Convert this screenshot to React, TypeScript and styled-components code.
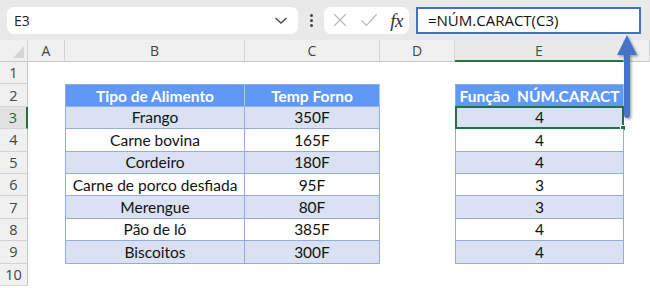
import React from "react";
import styled, { createGlobalStyle, css } from "styled-components";

const Global = createGlobalStyle`
  html, body { margin: 0; padding: 0; background: #fff; overflow: hidden; }
  * { box-sizing: border-box; }
`;

const Page = styled.div`
  width: 650px;
  height: 288px;
  position: relative;
  overflow: hidden;
  background: #fff;
`;

const Toolbar = styled.div`
  height: 40px;
  background: #e9e9e9;
  display: flex;
  align-items: center;
  padding: 0 9px 0 7px;
  font-family: "Open Sans", "Noto Sans", sans-serif;
`;

const NameBox = styled.div`
  width: 291px;
  height: 27px;
  background: #fff;
  border-radius: 7px;
  display: flex;
  align-items: center;
  justify-content: space-between;
  padding: 0 10px 0 7px;
  font-size: 14px;
  color: #222;
`;

const Dots = styled.div`
  width: 26px;
  display: flex;
  flex-direction: column;
  align-items: center;
  gap: 2px;
  span {
    width: 3px;
    height: 3px;
    border-radius: 50%;
    background: #444;
  }
`;

const IconBox = styled.div`
  width: 85px;
  height: 27px;
  background: #fff;
  border-radius: 7px;
  display: flex;
  align-items: center;
  justify-content: space-between;
  padding: 0 6px 0 8px;
`;

const Fx = styled.span`
  font-family: "Liberation Serif", serif;
  font-style: italic;
  font-size: 19px;
  color: #333;
  line-height: 1;
  letter-spacing: -0.5px;
`;

const FormulaBox = styled.div`
  margin-left: 7px;
  flex: 1;
  height: 27px;
  border: 2px solid #4472c4;
  background: #fff;
  display: flex;
  align-items: center;
  padding-left: 10px;
  font-size: 15px;
  color: #111;
`;

const Sheet = styled.div`
  display: grid;
  grid-template-columns: 28px 37px 180px 135px 75px 169px 1fr;
  grid-template-rows: 22px repeat(10, 22.4px);
`;

const ColHeader = styled.div<{ $active?: boolean }>`
  background: #f0f0f0;
  border-right: 1px solid #d4d4d4;
  border-bottom: 1px solid #c6c6c6;
  display: flex;
  align-items: center;
  justify-content: center;
  font-family: "Open Sans", "Noto Sans", sans-serif;
  font-size: 14px;
  color: #444;
  position: relative;
  ${(p) =>
    p.$active &&
    css`
      background: #e9e9e9;
      color: #1e6b45;
      border-bottom: 2px solid #217346;
    `}
`;

const Corner = styled(ColHeader)`
  svg { position: absolute; right: 3px; bottom: 3px; }
`;

const RowHeader = styled.div<{ $active?: boolean }>`
  background: #f0f0f0;
  border-right: 1px solid #c6c6c6;
  border-bottom: 1px solid #d4d4d4;
  display: flex;
  align-items: center;
  justify-content: center;
  font-family: "Open Sans", "Noto Sans", sans-serif;
  font-size: 14.5px;
  color: #444;
  ${(p) =>
    p.$active &&
    css`
      background: #e1e1e1;
      color: #1e6b45;
      border-right: 2px solid #217346;
    `}
`;

const Empty = styled.div`
  background: #fff;
`;

type Kind = "head" | "band" | "plain";

const Cell = styled.div<{ $kind: Kind; $first?: boolean; $top?: boolean }>`
  position: relative;
  display: flex;
  align-items: center;
  justify-content: center;
  font-family: "Lato", "Noto Sans", sans-serif;
  font-size: 15.5px;
  color: #111;
  white-space: nowrap;
  border-right: 1px solid #93ace0;
  border-bottom: 1px solid #93ace0;
  ${(p) => p.$first && css`border-left: 1px solid #93ace0;`}
  ${(p) => p.$top && css`border-top: 1px solid #93ace0;`}
  background: ${(p) =>
    p.$kind === "head" ? "#5f98f5" : p.$kind === "band" ? "#d9e1f2" : "#ffffff"};
  ${(p) =>
    p.$kind === "head" &&
    css`
      color: #fff;
      font-weight: 700;
      border-right-color: #a9c4f5;
      border-bottom-color: #8fb0ee;
    `}
`;

const Selection = styled.div`
  position: absolute;
  left: -1px;
  top: -1px;
  right: -1px;
  bottom: -1px;
  border: 2px solid #217346;
  pointer-events: none;
`;

const Handle = styled.div`
  position: absolute;
  right: -4px;
  bottom: -4px;
  width: 6px;
  height: 6px;
  background: #217346;
  border: 1px solid #fff;
`;

const Arrow = styled.svg`
  position: absolute;
  left: 610px;
  top: 30px;
  overflow: visible;
`;

const items: [string, string, number][] = [
  ["Frango", "350F", 4],
  ["Carne bovina", "165F", 4],
  ["Cordeiro", "180F", 4],
  ["Carne de porco desfiada", "95F", 3],
  ["Merengue", "80F", 3],
  ["Pão de ló", "385F", 4],
  ["Biscoitos", "300F", 4],
];

export default function App() {
  const cols = ["A", "B", "C", "D", "E", ""];
  return (
    <Page>
      <Global />
      <Toolbar>
        <NameBox>
          <span>E3</span>
          <svg width="14" height="9" viewBox="0 0 14 9">
            <path d="M1.5 2 L7 7 L12.5 2" fill="none" stroke="#444" strokeWidth="1.3" />
          </svg>
        </NameBox>
        <Dots>
          <span />
          <span />
          <span />
        </Dots>
        <IconBox>
          <svg width="16" height="16" viewBox="0 0 16 16">
            <path d="M2 2 L14 14 M14 2 L2 14" stroke="#b8b8b8" strokeWidth="1.2" fill="none" />
          </svg>
          <svg width="18" height="16" viewBox="0 0 18 16">
            <path d="M1.5 8.5 L6.5 13.5 L16.5 2.5" stroke="#b8b8b8" strokeWidth="1.2" fill="none" />
          </svg>
          <Fx>fx</Fx>
        </IconBox>
        <FormulaBox>=NÚM.CARACT(C3)</FormulaBox>
      </Toolbar>
      <Sheet>
        <Corner>
          <svg width="11" height="12" viewBox="0 0 11 12">
            <path d="M11 0 L11 12 L0 12 Z" fill="#d6d6d6" />
          </svg>
        </Corner>
        {cols.map((c, i) => (
          <ColHeader key={i} $active={c === "E"}>
            {c}
          </ColHeader>
        ))}
        {Array.from({ length: 10 }, (_, r) => {
          const row = r + 1;
          const out: React.ReactNode[] = [];
          out.push(
            <RowHeader key={`h${row}`} $active={row === 3}>
              {row}
            </RowHeader>
          );
          out.push(<Empty key={`a${row}`} />);
          if (row === 2) {
            out.push(
              <Cell key="b2" $kind="head" $first $top>
                Tipo de Alimento
              </Cell>,
              <Cell key="c2" $kind="head" $top>
                Temp Forno
              </Cell>,
              <Empty key="d2" />,
              <Cell key="e2" $kind="head" $first $top>
                Função&nbsp;&nbsp;NÚM.CARACT
              </Cell>
            );
          } else if (row >= 3 && row <= 9) {
            const [name, temp, n] = items[row - 3];
            const kind: Kind = row % 2 === 1 ? "band" : "plain";
            out.push(
              <Cell key={`b${row}`} $kind={kind} $first>
                {name}
              </Cell>,
              <Cell key={`c${row}`} $kind={kind}>
                {temp}
              </Cell>,
              <Empty key={`d${row}`} />,
              <Cell key={`e${row}`} $kind={kind} $first>
                {n}
                {row === 3 && (
                  <Selection>
                    <Handle />
                  </Selection>
                )}
              </Cell>
            );
          } else {
            out.push(<Empty key={`b${row}`} />, <Empty key={`c${row}`} />, <Empty key={`d${row}`} />, <Empty key={`e${row}`} />);
          }
          out.push(<Empty key={`f${row}`} />);
          return out;
        })}
      </Sheet>
      <Arrow width="30" height="92" viewBox="0 0 30 92">
        <defs>
          <filter id="sh" x="-50%" y="-20%" width="200%" height="140%">
            <feDropShadow dx="1.5" dy="1.5" stdDeviation="1.2" floodColor="#000" floodOpacity="0.35" />
          </filter>
        </defs>
        <g filter="url(#sh)">
          <path d="M7 25 L17 5 L27 25 L20 25 L20 85 Q20 88 17 88 Q14 88 14 85 L14 25 Z" fill="#4674c6" />
        </g>
      </Arrow>
    </Page>
  );
}
